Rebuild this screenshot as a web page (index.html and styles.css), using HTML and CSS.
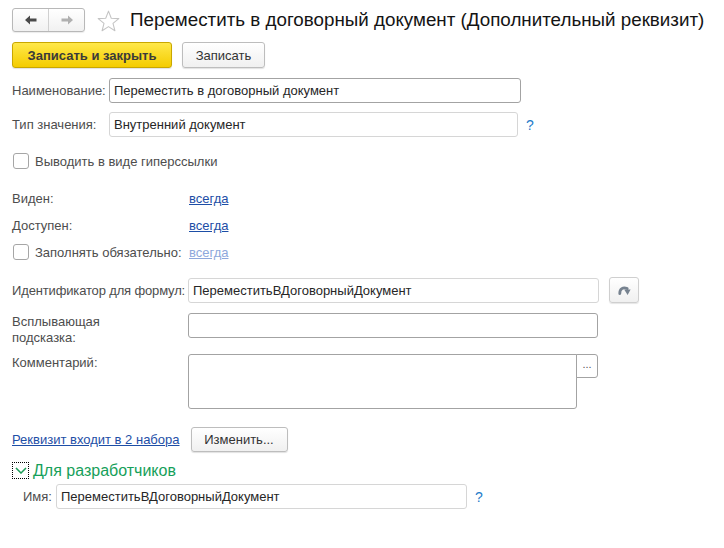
FILE: index.html
```html
<!DOCTYPE html>
<html lang="ru">
<head>
<meta charset="utf-8">
<title>Дополнительный реквизит</title>
<link rel="stylesheet" href="styles.css">
</head>
<body>
<div class="page">
  <header class="titlebar">
    <div class="nav">
      <button class="nav-btn" aria-label="Назад">
        <svg width="12" height="10" viewBox="0 0 12 10"><path d="M0 5 L5 0.5 L5 3.5 L11.5 3.5 L11.5 6.5 L5 6.5 L5 9.5 Z" fill="#4a4a4a"/></svg>
      </button>
      <button class="nav-btn" aria-label="Вперёд">
        <svg width="12" height="10" viewBox="0 0 12 10"><path d="M12 5 L7 0.5 L7 3.5 L0.5 3.5 L0.5 6.5 L7 6.5 L7 9.5 Z" fill="#b0b0b0"/></svg>
      </button>
    </div>
    <svg class="star" width="23" height="22" viewBox="0 0 24 23"><polygon points="12,1.2 14.9,8.6 22.8,9 16.7,14 18.7,21.7 12,17.4 5.3,21.7 7.3,14 1.2,9 9.1,8.6" fill="none" stroke="#c4c4c4" stroke-width="1.1" stroke-linejoin="round"/></svg>
    <h1 class="title">Переместить в договорный документ (Дополнительный реквизит)</h1>
  </header>

  <div class="toolbar">
    <button class="btn btn-primary">Записать и закрыть</button>
    <button class="btn btn-save">Записать</button>
  </div>

  <div class="row row-r1">
    <label class="lbl lbl-short">Наименование:</label>
    <div class="field field-focus w-name">Переместить в договорный документ</div>
  </div>

  <div class="row row-r2">
    <label class="lbl lbl-short">Тип значения:</label>
    <div class="field field-ro w-type">Внутренний документ</div>
    <span class="help">?</span>
  </div>

  <div class="row row-check">
    <span class="checkbox"></span>
    <span class="check-lbl">Выводить в виде гиперссылки</span>
  </div>

  <div class="row row-line row-visible">
    <span class="lbl lbl-long">Виден:</span>
    <a class="link" href="#">всегда</a>
  </div>

  <div class="row row-line row-avail">
    <span class="lbl lbl-long">Доступен:</span>
    <a class="link" href="#">всегда</a>
  </div>

  <div class="row row-line row-fill">
    <span class="lbl lbl-long lbl-check"><span class="checkbox"></span><span class="check-lbl">Заполнять обязательно:</span></span>
    <a class="link link-disabled" href="#">всегда</a>
  </div>

  <div class="row row-ident">
    <span class="lbl lbl-long lbl-tight">Идентификатор для формул:</span>
    <div class="field field-ro w-ident">ПереместитьВДоговорныйДокумент</div>
    <button class="icon-btn" aria-label="Обновить">
      <svg width="13" height="11" viewBox="0 0 13 11"><path d="M1.8 8.6 C1.6 4 5 1.6 9.2 3.6" fill="none" stroke="#76828f" stroke-width="2.8" stroke-linecap="round"/><polygon points="6.2,4.4 12.6,4.4 9.6,10" fill="#76828f"/></svg>
    </button>
  </div>

  <div class="row row-tip">
    <span class="lbl lbl-long lbl-multi">Всплывающая<br>подсказка:</span>
    <div class="field field-focus w-tip"></div>
  </div>

  <div class="row row-comment">
    <span class="lbl lbl-long lbl-multi">Комментарий:</span>
    <div class="textarea"></div>
    <button class="more-btn">...</button>
  </div>

  <div class="row row-sets">
    <a class="link link-sets" href="#">Реквизит входит в 2 набора</a>
    <button class="btn btn-change">Изменить...</button>
  </div>

  <div class="row row-group">
    <span class="toggle">
      <svg width="12" height="7" viewBox="0 0 12 7"><polyline points="1,1 6,6 11,1" fill="none" stroke="#1a9c55" stroke-width="1.5"/></svg>
    </span>
    <span class="group-title">Для разработчиков</span>
  </div>

  <div class="row row-devname">
    <span class="lbl lbl-dev">Имя:</span>
    <div class="field field-ro w-dev">ПереместитьВДоговорныйДокумент</div>
    <span class="help">?</span>
  </div>
</div>
</body>
</html>
```

FILE: styles.css
```css
* { box-sizing: border-box; }

html, body {
  margin: 0;
  padding: 0;
  background: #ffffff;
}

body {
  font-family: "Liberation Sans", Arial, sans-serif;
  font-size: 13px;
  color: #4d4d4d;
}

.page {
  padding: 8px 12px 0 12px;
  width: 724px;
}

/* ---------- title bar ---------- */
.titlebar {
  display: flex;
  align-items: center;
  height: 24px;
}

.nav {
  display: flex;
  flex: none;
  width: 73px;
  height: 24px;
  border: 1px solid #b8b8b8;
  border-radius: 3px;
  background: linear-gradient(#ffffff, #f1f1f1);
  box-shadow: 0 1px 1px rgba(0,0,0,0.08);
  overflow: hidden;
}

.nav-btn {
  flex: 1;
  display: flex;
  align-items: center;
  justify-content: center;
  border: 0;
  padding: 0;
  background: transparent;
}

.nav-btn + .nav-btn {
  border-left: 1px solid #d0d0d0;
}

.star {
  flex: none;
  margin-left: 12px;
  margin-top: 1px;
}

.title {
  margin: 0 0 0 10px;
  font-size: 18.8px;
  font-weight: normal;
  color: #141414;
  white-space: nowrap;
  line-height: 24px;
}

/* ---------- buttons ---------- */
.toolbar {
  display: flex;
  gap: 10px;
  margin-top: 10px;
  height: 26px;
}

.btn {
  font-family: inherit;
  font-size: 13px;
  height: 26px;
  padding: 0;
  border: 1px solid #bdbdbd;
  border-radius: 3px;
  background: linear-gradient(#ffffff, #f0f0f0);
  color: #333333;
  box-shadow: 0 1px 1px rgba(0,0,0,0.12);
}

.btn-primary {
  width: 160px;
  font-weight: bold;
  color: #3a3a3a;
  border-color: #c9a700;
  background: linear-gradient(#ffe84a, #f4cc00);
}

.btn-save {
  width: 83px;
}

/* ---------- form rows ---------- */
.row {
  display: flex;
  align-items: center;
}

.row-r1 { margin-top: 10px; height: 25px; }
.row-r2 { margin-top: 9px; height: 25px; }
.row-check { margin-top: 16px; height: 16px; }
.row-line { height: 16px; }
.row-visible { margin-top: 21px; }
.row-avail { margin-top: 11px; }
.row-fill { margin-top: 11px; }
.row-ident { margin-top: 17px; height: 26px; }
.row-tip { margin-top: 10px; align-items: flex-start; }
.row-comment { margin-top: 8px; align-items: flex-start; }
.row-sets { margin-top: 18px; height: 24px; }
.row-group { margin-top: 11px; height: 17px; }
.row-devname { margin-top: 5px; height: 25px; }

.lbl {
  flex: none;
  white-space: nowrap;
  color: #4d4d4d;
}

.lbl-short { width: 97px; }
.lbl-long { width: 176px; }
.lbl-dev { width: 44px; padding-left: 11px; }
.lbl-tight { letter-spacing: -0.15px; }

.lbl-multi {
  line-height: 16px;
  padding-top: 1px;
}

.lbl-check {
  display: flex;
  align-items: center;
}

.field {
  flex: none;
  height: 25px;
  border: 1px solid #d2d2d2;
  border-radius: 3px;
  padding: 0 4px;
  line-height: 23px;
  color: #262626;
  background: #ffffff;
  white-space: nowrap;
  overflow: hidden;
}

.field-focus { border-color: #a3a3a3; }
.field-ro { border-color: #d6d6d6; }

.w-name { width: 412px; }
.w-type { width: 409px; }
.w-ident { width: 411px; }
.w-tip { width: 410px; }
.w-dev { width: 411px; }

.help {
  margin-left: 8px;
  color: #1f7cc9;
  font-size: 14px;
}

.checkbox {
  flex: none;
  display: inline-block;
  width: 16px;
  height: 16px;
  margin-left: 1px;
  border: 1px solid #a6a6a6;
  border-radius: 3px;
  background: #ffffff;
}

.check-lbl {
  margin-left: 6px;
  color: #4d4d4d;
}

.link {
  color: #1d4ea6;
  text-decoration: underline;
  margin-left: 1px;
}

.link-disabled {
  color: #8ea8dc;
}

.icon-btn {
  flex: none;
  width: 30px;
  height: 26px;
  margin-left: 10px;
  padding: 0;
  display: flex;
  align-items: center;
  justify-content: center;
  border: 1px solid #cfcfcf;
  border-radius: 3px;
  background: linear-gradient(#ffffff, #f0f0f0);
  box-shadow: 0 1px 1px rgba(0,0,0,0.1);
}

.textarea {
  flex: none;
  width: 389px;
  height: 55px;
  border: 1px solid #a3a3a3;
  border-radius: 3px 0 3px 3px;
  background: #ffffff;
}

.more-btn {
  flex: none;
  width: 22px;
  height: 24px;
  margin-left: -1px;
  padding: 0 0 4px 0;
  border: 1px solid #a3a3a3;
  border-radius: 0 3px 3px 0;
  background: #ffffff;
  font-family: inherit;
  font-size: 11px;
  color: #555555;
  line-height: 1;
}

.link-sets {
  margin-left: 0;
  color: #1d4ea6;
}

.btn-change {
  margin-left: 11px;
  width: 97px;
  height: 25px;
}

.toggle {
  flex: none;
  width: 17px;
  height: 17px;
  border: 1px dotted #000000;
  display: flex;
  align-items: center;
  justify-content: center;
}

.group-title {
  margin-left: 4px;
  font-size: 16px;
  color: #16a05a;
}
```
